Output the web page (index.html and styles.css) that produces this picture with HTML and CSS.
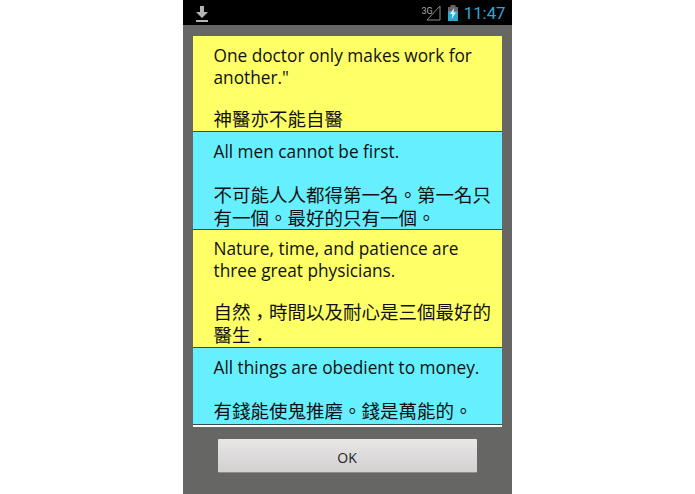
FILE: index.html
```
<!DOCTYPE html>
<html lang="zh-Hant">
<head>
<meta charset="utf-8">
<title>Quotes</title>
<link rel="stylesheet" href="styles.css">
</head>
<body>
<div class="phone">
  <header class="status">
    <svg class="dl" width="14" height="18" viewBox="0 0 14 18"><path d="M5 1h4v6h4l-6 6-6-6h4z" fill="#b4b4b4"/><rect x="1" y="15" width="12" height="2" fill="#b4b4b4"/></svg>
    <div class="status-right">
      <span class="net">3G</span>
      <svg class="signal" width="15" height="16" viewBox="0 0 15 16"><path d="M14 1v14H1z" fill="none" stroke="#8a8a8a" stroke-width="1"/></svg>
      <svg class="batt" width="12" height="16" viewBox="0 0 12 16"><rect x="3.500" y="0" width="5" height="2" fill="#666"/><rect x="1" y="2" width="10" height="4" fill="#666"/><rect x="1" y="6" width="10" height="10" fill="#33a5d5"/><path d="M7 3L3 9h2.500L4.500 14 9 7.500H6.500z" fill="#e8f4f8"/></svg>
      <span class="clock">11:47</span>
    </div>
  </header>
  <main class="content">
    <section class="list">
      <div class="row yellow r1"><p>One doctor only makes work for another."</p><p class="zh">神醫亦不能自醫</p></div>
      <div class="row cyan r2"><p>All men cannot be first.</p><p class="zh">不可能人人都得第一名。第一名只有一個。最好的只有一個。</p></div>
      <div class="row yellow r3"><p>Nature, time, and patience are three great physicians.</p><p class="zh">自然<span class="mid">，</span>時間以及耐心是三個最好的<br>醫生<span class="mid">．</span></p></div>
      <div class="row cyan r4"><p>All things are obedient to money.</p><p class="zh">有錢能使鬼推磨。錢是萬能的。</p></div>
    </section>
    <div class="actions"><button class="ok" type="button">OK</button></div>
  </main>
</div>
</body>
</html>
```
FILE: styles.css
```
* { box-sizing: border-box; }
html, body { margin: 0; height: 100%; background: #fff; }
body { display: flex; justify-content: center; padding-right: 1px; }
.phone { width: 329px; height: 494px; display: flex; flex-direction: column; background: #666665; font-family: "Open Sans", "Noto Sans CJK JP", sans-serif; }
.status { height: 25px; flex: none; background: #000; display: flex; align-items: center; justify-content: space-between; padding: 0 6px 0 12px; }
.dl { margin-top: 2px; }
.status-right { display: flex; align-items: center; }
.net { font: 9px "Roboto", sans-serif; color: #aaa; align-self: flex-start; margin: 3px -7px 0 0; }
.signal { margin-right: 6px; margin-top: 1px; }
.batt { margin-right: 5px; margin-top: 1px; }
.clock { font: 16.800px "Roboto", sans-serif; color: #33a5d5; }
.content { flex: 1; display: flex; flex-direction: column; padding: 11px 10px 0; }
.list { height: 391px; background: #fff; }
.row { border-bottom: 1px solid #33504f; padding: 0 9px 0 21px; }
.row p { margin: 0; font-size: 17.250px; line-height: 22px; color: #111; }
.row .zh { font-family: "Noto Sans CJK JP", sans-serif; font-size: 18.500px; line-height: 22.500px; margin-top: 20px; }
.r1 .zh, .r3 .zh { margin-top: 18px; }
.mid { font-family: "Noto Sans CJK TC", sans-serif; line-height: 0; vertical-align: -5px; }
.yellow { background: #ffff66; }
.cyan { background: #66f0ff; }
.r1 { height: 96px; padding-top: 9px; }
.r2 { height: 98px; padding-top: 9px; }
.r3 { height: 118px; padding-top: 8px; }
.r4 { height: 77px; padding-top: 9px; }
.actions { display: flex; justify-content: center; padding: 12px 0 0; }
.ok { width: 259px; height: 34px; border: 0; border-bottom: 1px solid #8d8d8d; border-radius: 1px; background: linear-gradient(#e9e6e8, #d2d0d0); color: #222; font: 14px "Open Sans", sans-serif; padding: 4px 0 0; }
```
